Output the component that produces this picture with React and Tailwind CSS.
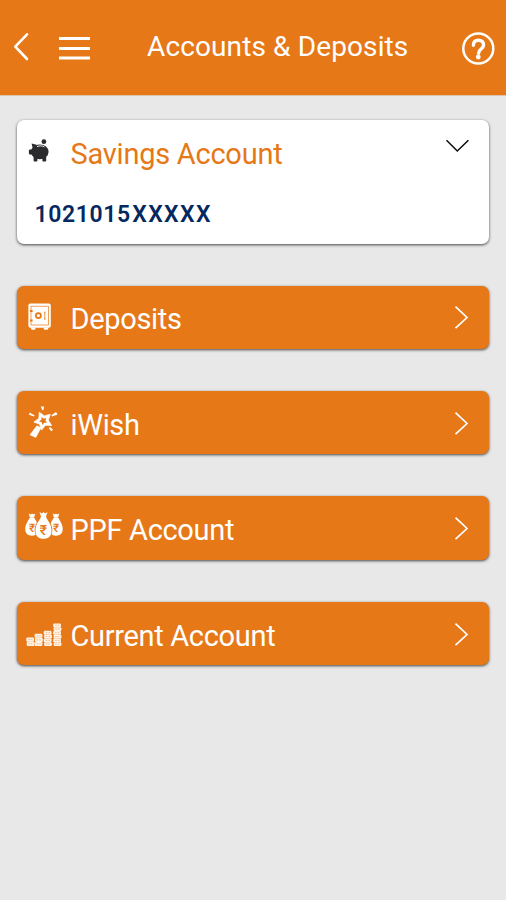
import React from "react";

const PiggyIcon = () => (
  <svg className="h-16 w-[53px] shrink-0" viewBox="0 0 53 64" fill="#2b2b2d">
    <circle cx="26.9" cy="21.7" r="2.4" />
    <ellipse cx="22.8" cy="31.8" rx="8.8" ry="7.4" />
    <path d="M14.6 23.4l5 1.4-3.6 4.4z" />
    <rect x="11.9" y="29.4" width="5" height="5.2" rx="1" />
    <rect x="16.6" y="36" width="3.8" height="5.6" rx=".8" />
    <rect x="25.4" y="36" width="3.8" height="5.6" rx=".8" />
    <path d="M20 26.6c2.6-1.1 5.2-1 7.4.3" fill="none" stroke="#fff" strokeWidth=".9" />
  </svg>
);

const SafeIcon = () => (
  <svg className="h-16 w-[53px] shrink-0" viewBox="0 0 53 64" fill="none" stroke="#e67817">
    <rect x="11.4" y="18.4" width="22.4" height="24.4" rx="2" fill="#fff" stroke="none" />
    <path d="M14 42.4h4.5V44l-1 .8H15l-1-.8zM26.7 42.4h4.5V44l-1 .8h-2.5l-1-.8z" fill="#fff" stroke="none" />
    <rect x="14" y="21.2" width="17.6" height="18.8" strokeWidth=".7" />
    <circle cx="21.4" cy="30.6" r="2.5" strokeWidth="1.8" />
    <path d="M27.8 27.2v7M27 27.2h1.6M27 34.2h1.6" strokeWidth=".8" />
    <path d="M13 26h2.6M13 35.5h2.6" strokeWidth="1.9" />
  </svg>
);

const STAR = "M-4-8.6L1-4.9 6.9-6.5 5-.6 8.3 4.6 2.1 4.5-1.8 9.3-3.7 3.4-9.4 1.2-4.4-2.4z";

const WandIcon = () => (
  <svg className="h-16 w-[53px] shrink-0" viewBox="0 0 53 64" fill="#fff">
    <path d="M19.8 34.4l4.6 2-5.5 10.4-6.3-2.8z" />
    <path d={STAR} transform="translate(26.3 29.8)" stroke="#fff" strokeWidth=".8" />
    <path d={STAR} transform="translate(26.3 29.8) scale(.44)" fill="#e67817" />
    <path d="M23.8 15.4h3.4l-.9 3.8h-1zM11.8 23.8l1-2.4 4.8 3-.6 1.2zM34.4 24.3l4.7-3.2 1.4 2.5-5.5 1.9zM33 36.1l3 2.6-1.6 1.6-2.6-3z" />
  </svg>
);

const Bag = ({ size }) => (
  <g transform={size}>
    <path d="M-4-17.6l2.4 1.3L0-17.6l1.6 1.3L4-17.6l-1.6 4.8h-4.8z" />
    <path d="M-2.6-12.6h5.2C3.7-9.7 8-5.3 8 1c0 5.4-3 8-8 8s-8-2.6-8-8c0-6.3 4.3-10.7 5.4-13.6z" />
    <text x="0" y="5" textAnchor="middle" className="font-['Roboto','DejaVu_Sans',sans-serif] text-[14px] font-medium" fill="#e67817">₹</text>
  </g>
);

const BagsIcon = () => (
  <svg className="h-16 w-[53px] shrink-0" viewBox="0 0 53 64" fill="#fff">
    <Bag size="translate(15 32.2) scale(.84)" />
    <Bag size="translate(39 32.2) scale(.84)" />
    <path d="M24 20.5h5c1.1 2.7 5.8 7 5.8 13.7 0 5.4-3 8.2-8.3 8.2s-8.3-2.8-8.3-8.2c0-6.7 4.7-11 5.8-13.7z" fill="none" stroke="#e67817" strokeWidth="1.2" />
    <Bag size="translate(26.5 33.7)" />
  </svg>
);

const STACKS = [
  { x: 9.3, rows: 2, top: 35.4 },
  { x: 17.6, rows: 3, top: 31.8 },
  { x: 26.7, rows: 4, top: 28.8 },
  { x: 36.2, rows: 6, top: 21.4 },
];

const CoinsIcon = () => (
  <svg className="h-16 w-[53px] shrink-0" viewBox="0 0 53 64">
    {STACKS.map(({ x, rows, top }) => {
      const h = (44 - top) / rows;
      return Array.from({ length: rows }, (_, i) => (
        <g key={`${x}-${i}`}>
          <rect x={x + (i % 2 ? 0.4 : 0)} y={top + i * h} width="7.8" height={h} rx="1.2" fill="#fff3e6" />
          <path d={`M${x + 2} ${top + (i + 0.5) * h}h1.6m1 0h1.6`} stroke="#f3b989" strokeWidth="1" />
        </g>
      ));
    })}
  </svg>
);

const ROWS = [
  { label: "Deposits", Icon: SafeIcon },
  { label: "iWish", Icon: WandIcon },
  { label: "PPF Account", Icon: BagsIcon },
  { label: "Current Account", Icon: CoinsIcon },
];

const AccountRow = ({ label, Icon }) => (
  <button className="flex h-[63.4px] w-full items-center rounded-[7px] bg-[#e67817] text-left shadow-[0_1px_3px_0_rgba(0,0,0,0.7)]">
    <Icon />
    <span className="flex-1 pt-1 pl-[0.5px] text-[29px] leading-8 tracking-[-0.32px] text-white">{label}</span>
    <svg className="h-16 w-12 shrink-0" viewBox="0 0 48 64" fill="none" stroke="#fff" strokeWidth="1.7">
      <path d="M14.5 21.7L26 32.5 14.5 43.2" />
    </svg>
  </button>
);

export default function App() {
  return (
    <div className="flex h-[900px] w-[506px] flex-col bg-[#e8e8e8] font-['Roboto',sans-serif]">
      <header className="flex h-24 shrink-0 items-center border-b border-[#dcc4b2] bg-[#e67817] text-white">
        <svg className="h-24 w-[147px] shrink-0" viewBox="0 0 147 96" fill="none" stroke="#fff">
          <path d="M27 34.3L15.3 46.7 27 59" strokeWidth="2.6" strokeLinecap="round" strokeLinejoin="round" />
          <path d="M59 38.5h31M59 48.5h31M59 58h31" strokeWidth="3" />
        </svg>
        <h1 className="flex-1 pb-[2px] text-[28px] leading-8 tracking-[0.12px] whitespace-nowrap">Accounts &amp; Deposits</h1>
        <svg className="h-24 w-[46px] shrink-0" viewBox="460 0 46 96" fill="none" stroke="#fff">
          <circle cx="478.3" cy="48.5" r="15" strokeWidth="2.5" />
          <path d="M473.4 45.2c0-3.3 2.1-5 5-5s5.2 1.7 5.2 4.6c0 4.3-5 4.2-5 8.4" strokeWidth="3.4" strokeLinecap="round" />
          <circle cx="478.3" cy="57" r="2.4" fill="#fff" stroke="none" />
        </svg>
      </header>
      <main className="flex flex-col gap-[42px] pt-6 pr-[17px] pl-[17px]">
        <section className="h-[123.7px] rounded-[7px] bg-white shadow-[0_1px_3px_0_rgba(0,0,0,0.7)]">
          <div className="flex h-16 items-center">
            <PiggyIcon />
            <h2 className="flex-1 pt-[3px] pl-[0.5px] text-[29px] leading-8 tracking-[-0.25px] text-[#e67817]">Savings Account</h2>
            <svg className="h-16 w-12 shrink-0" viewBox="0 0 48 64" fill="none" stroke="#111" strokeWidth="1.6">
              <path d="M5.5 20.2L16.3 31 27.4 20.2" />
            </svg>
          </div>
          <p className="pt-[17px] pl-[17.5px] text-[23px] leading-7 font-semibold text-[#05285f]">
            <span className="tracking-[0.6px]">1021015</span>
            <span className="ml-[1.5px] tracking-[1.4px]">XXXXX</span>
          </p>
        </section>
        {ROWS.map((row) => (
          <AccountRow key={row.label} {...row} />
        ))}
      </main>
    </div>
  );
}
